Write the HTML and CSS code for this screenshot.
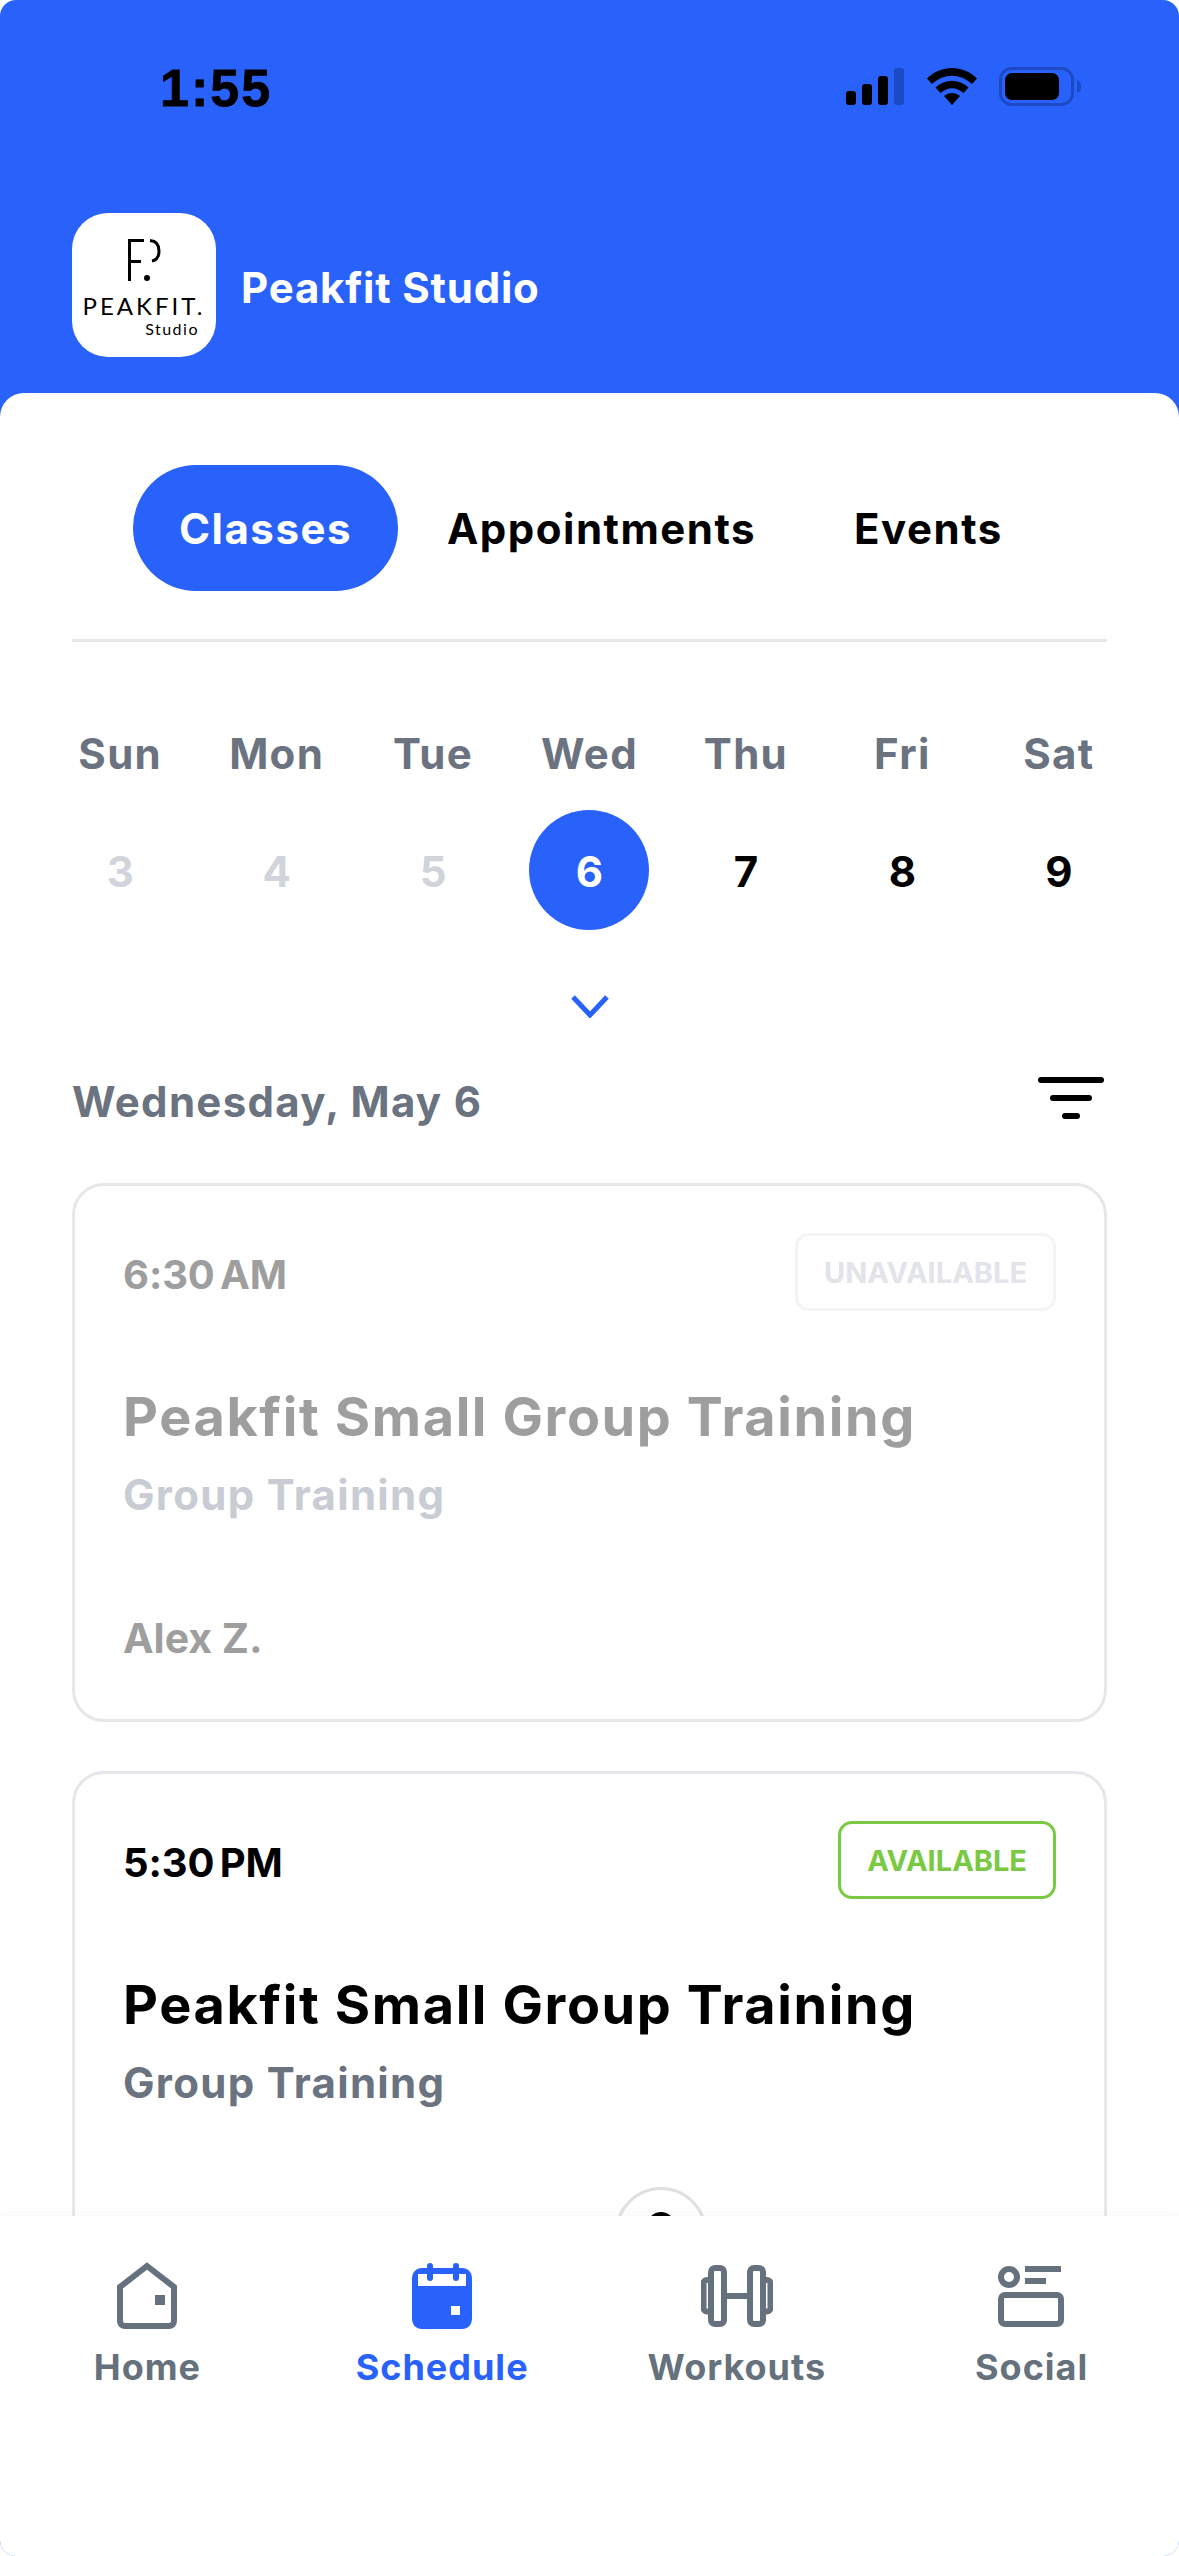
FILE: index.html
```html
<!DOCTYPE html>
<html lang="en">
<head>
    <meta charset="UTF-8">
    <meta name="viewport" content="width=device-width, initial-scale=1.0">
    <title>Peakfit Studio</title>
    <link rel="stylesheet" href="styles.css">
</head>
<body>
    <div class="app">
        <header class="top">
            <div class="status">
                <span class="clock">1:55</span>
                <div class="status-icons">
                    <svg width="58" height="37" viewBox="0 0 58 37">
                        <rect x="0" y="23" width="10" height="14" rx="3"/>
                        <rect x="16" y="16" width="10" height="21" rx="3"/>
                        <rect x="32" y="8" width="10" height="29" rx="3"/>
                        <rect class="dim" x="48" y="0" width="10" height="37" rx="3"/>
                    </svg>
                    <svg width="50" height="37" viewBox="0 0 50 37">
                        <path d="M0 10.500C14-3.500 36-3.500 50 10.500L45 16C33 5 17 5 5 16Z"/>
                        <path d="M8.500 19.500C18 10.500 32 10.500 41.500 19.500L36.500 25C29 18.500 21 18.500 13.500 25Z"/>
                        <path d="M17 28C22 24 28 24 33 28L25 37Z"/>
                    </svg>
                    <svg width="82" height="39" viewBox="0 0 82 39">
                        <rect class="dim-line" x="1.500" y="1.500" width="72" height="36" rx="11"/>
                        <rect x="6" y="6" width="54" height="27" rx="7"/>
                        <path class="dim" d="M78 13C81 14 82 16 82 19.500C82 23 81 25 78 26Z"/>
                    </svg>
                </div>
            </div>
            <div class="brand">
                <div class="logo">
                    <svg class="logo-mark" width="33" height="43" viewBox="0 0 33 43">
                        <rect x="0" y="0" width="3" height="42"/>
                        <rect x="0" y="0" width="16" height="3"/>
                        <rect x="0" y="21" width="13" height="3"/>
                        <path class="logo-curve" d="M22 1.500C29 2 31 7 31 12C31 17 29 21 24 22"/>
                        <circle cx="19" cy="39" r="3"/>
                    </svg>
                    <span class="logo-name">PEAKFIT.</span>
                    <span class="logo-sub">Studio</span>
                </div>
                <span class="brand-name">Peakfit Studio</span>
            </div>
        </header>

        <main class="panel">
            <nav class="tabs">
                <a class="tab active">Classes</a>
                <a class="tab">Appointments</a>
                <a class="tab">Events</a>
            </nav>

            <div class="week">
                <span class="wd">Sun</span>
                <span class="wd">Mon</span>
                <span class="wd">Tue</span>
                <span class="wd">Wed</span>
                <span class="wd">Thu</span>
                <span class="wd">Fri</span>
                <span class="wd">Sat</span>
                <span class="day past">3</span>
                <span class="day past">4</span>
                <span class="day past">5</span>
                <span class="day current">6</span>
                <span class="day">7</span>
                <span class="day">8</span>
                <span class="day">9</span>
            </div>

            <div class="expand">
                <svg width="38" height="24" viewBox="0 0 38 24"><path d="M2 3L19 21L36 3"/></svg>
            </div>

            <div class="date-row">
                <h2>Wednesday, May 6</h2>
                <div class="filter">
                    <span class="f1"></span>
                    <span class="f2"></span>
                    <span class="f3"></span>
                </div>
            </div>

            <section class="card off">
                <div class="card-head">
                    <span class="time">6:30 AM</span>
                    <span class="badge">UNAVAILABLE</span>
                </div>
                <h3>Peakfit Small Group Training</h3>
                <p class="kind">Group Training</p>
                <p class="coach">Alex Z.</p>
            </section>

            <section class="card">
                <div class="card-head">
                    <span class="time">5:30 PM</span>
                    <span class="badge">AVAILABLE</span>
                </div>
                <h3>Peakfit Small Group Training</h3>
                <p class="kind">Group Training</p>
                <div class="avatar"><span class="avatar-head"></span></div>
            </section>
        </main>

        <footer class="tabbar">
            <a class="item">
                <svg width="62" height="68" viewBox="0 0 62 68">
                    <path class="line" d="M31 4L58 25V59C58 62 56 64 53 64H9C6 64 4 62 4 59V25Z"/>
                    <rect class="solid" x="39" y="33" width="10" height="10"/>
                </svg>
                <span>Home</span>
            </a>
            <a class="item selected">
                <svg width="62" height="68" viewBox="0 0 62 68">
                    <path class="solid" d="M1 17C1 10 5 6 11 6H51C57 6 61 10 61 17V56C61 63 57 67 51 67H11C5 67 1 63 1 56Z"/>
                    <path class="cut" d="M7 12H55V24H7Z"/>
                    <rect class="solid" x="16" y="1" width="6" height="18" rx="3"/>
                    <rect class="solid" x="42" y="1" width="6" height="18" rx="3"/>
                    <rect class="cut" x="40" y="44" width="9" height="9"/>
                </svg>
                <span>Schedule</span>
            </a>
            <a class="item">
                <svg width="72" height="62" viewBox="0 0 72 62">
                    <rect class="line" x="10" y="3" width="13" height="56" rx="4"/>
                    <rect class="line" x="49" y="3" width="13" height="56" rx="4"/>
                    <path class="line" d="M10 15H6C4 15 2.500 16.500 2.500 18V43C2.500 45 4 46.500 6 46.500H10M62 15H66C68 15 69.500 16.500 69.500 18V43C69.500 45 68 46.500 66 46.500H62M23 31H49"/>
                </svg>
                <span>Workouts</span>
            </a>
            <a class="item">
                <svg width="68" height="62" viewBox="0 0 68 62">
                    <circle class="line" cx="11" cy="12" r="8"/>
                    <rect class="solid" x="27" y="1" width="36" height="6"/>
                    <rect class="solid" x="27" y="13" width="21" height="6"/>
                    <rect class="line" x="3" y="30" width="60" height="29" rx="4"/>
                </svg>
                <span>Social</span>
            </a>
        </footer>
    </div>
</body>
</html>
```

FILE: styles.css
```css
/* Peakfit schedule screen */
* {
    box-sizing: border-box;
}
body {
    margin: 0;
    background-color: #fff;
    font-family: Inter, "Liberation Sans", sans-serif;
    color: #000;
}
h2, h3, p {
    margin: 0;
}
.app {
    width: 1179px;
    height: 2556px;
    display: flex;
    flex-direction: column;
    overflow: hidden;
    background-color: #2962fb;
    border-radius: 16px;
}

/* blue header */
.top {
    flex-shrink: 0;
}
.status {
    height: 175px;
    padding: 68px 98px 0 160px;
    display: flex;
    justify-content: space-between;
    align-items: flex-start;
}
.clock {
    font-family: "Liberation Sans", sans-serif;
    font-weight: 700;
    font-size: 52px;
    line-height: 40px;
    letter-spacing: 2px;
    -webkit-text-stroke: 0.8px #000;
}
.status-icons {
    display: flex;
    align-items: flex-start;
    gap: 23px;
}
.status-icons svg:last-child {
    margin-left: -1px;
    margin-top: -1px;
}
.dim {
    fill: #1c49c4;
}
.dim-line {
    fill: none;
    stroke: #1c49c4;
    stroke-width: 3;
}
.brand {
    padding: 38px 72px 36px;
    display: flex;
    align-items: center;
    gap: 25px;
}
.logo {
    width: 144px;
    height: 144px;
    background-color: #fff;
    border-radius: 36px;
    display: flex;
    flex-direction: column;
    align-items: center;
    padding-top: 26px;
}
.logo-curve {
    fill: none;
    stroke: #000;
    stroke-width: 3;
}
.logo-name {
    margin-top: 10px;
    font-family: Lato, sans-serif;
    font-weight: 400;
    font-size: 24px;
    line-height: 28px;
    letter-spacing: 3px;
    white-space: nowrap;
}
.logo-sub {
    align-self: flex-end;
    margin-right: 17px;
    font-family: Lato, sans-serif;
    font-weight: 400;
    font-size: 16px;
    line-height: 18px;
    letter-spacing: 1.5px;
}
.brand-name {
    margin-top: 5px;
    font-size: 42px;
    font-weight: 700;
    color: #fff;
    letter-spacing: 0.8px;
}

/* white panel */
.panel {
    flex: 1;
    min-height: 0;
    overflow: hidden;
    background-color: #fff;
    border-radius: 24px 24px 0 0;
    padding: 72px 72px 0;
}
.tabs {
    display: flex;
    align-items: center;
    gap: 49px;
    padding: 0 0 48px 61px;
    border-bottom: 3px solid #e5e7eb;
}
.tab {
    font-size: 42px;
    font-weight: 700;
    letter-spacing: 1.5px;
    white-space: nowrap;
}
.tab.active {
    width: 265px;
    height: 126px;
    border-radius: 63px;
    background-color: #2962fb;
    color: #fff;
    display: flex;
    align-items: center;
    justify-content: center;
}
.tab + .tab + .tab {
    margin-left: 49px;
}

/* week strip */
.week {
    margin: 0 -30px;
    padding-top: 84px;
    display: grid;
    grid-template-columns: repeat(7, 1fr);
    grid-template-rows: 55px 120px;
    row-gap: 29px;
    justify-items: center;
    align-items: center;
}
.wd {
    font-size: 42px;
    font-weight: 700;
    letter-spacing: 1.3px;
    color: #6b7280;
}
.day {
    width: 120px;
    height: 120px;
    border-radius: 50%;
    display: flex;
    align-items: center;
    justify-content: center;
    padding-top: 2px;
    font-size: 42px;
    font-weight: 700;
}
.day.past {
    color: #d1d5db;
}
.day.current {
    background-color: #2962fb;
    color: #fff;
}
.expand {
    display: flex;
    justify-content: center;
    padding-top: 64px;
}
.expand svg {
    fill: none;
    stroke: #2962fb;
    stroke-width: 5;
}

/* date row */
.date-row {
    margin-top: 54px;
    display: flex;
    justify-content: space-between;
    align-items: flex-start;
}
.date-row h2 {
    font-size: 42px;
    font-weight: 700;
    letter-spacing: 1.3px;
    line-height: 60px;
    color: #6b7280;
}
.filter {
    width: 66px;
    margin: 5px 3px 0 0;
    display: flex;
    flex-direction: column;
    align-items: center;
    gap: 12px;
}
.filter span {
    height: 6px;
    border-radius: 3px;
    background-color: #000;
}
.f1 { width: 66px; }
.f2 { width: 42px; }
.f3 { width: 18px; }

/* class cards */
.card {
    margin-top: 51px;
    height: 539px;
    border: 3px solid #e5e7eb;
    border-radius: 32px;
    padding: 47px 48px 0;
}
.card + .card {
    margin-top: 49px;
    height: 600px;
}
.card-head {
    display: flex;
    justify-content: space-between;
    align-items: center;
    height: 78px;
}
.time {
    margin-top: 4px;
    font-size: 40px;
    font-weight: 700;
    letter-spacing: -0.1px;
    word-spacing: -4px;
}
.badge {
    height: 78px;
    padding: 0 26px;
    border: 3px solid #7ac943;
    border-radius: 14px;
    color: #7ac943;
    font-size: 29px;
    font-weight: 700;
    line-height: 74px;
}
.card h3 {
    margin-top: 65px;
    font-size: 54px;
    font-weight: 700;
    letter-spacing: 1.6px;
    line-height: 81px;
    white-space: nowrap;
}
.kind {
    margin-top: 8px;
    font-size: 42px;
    font-weight: 700;
    letter-spacing: 1.3px;
    line-height: 60px;
    color: #6b7280;
}
.coach {
    margin-top: 83px;
    font-size: 41px;
    font-weight: 700;
    line-height: 60px;
}
.card.off .time,
.card.off h3,
.card.off .coach {
    color: #9e9e9e;
}
.card.off .kind {
    color: #c9ccd3;
}
.card.off .badge {
    border-color: #f3f4f6;
    color: #e2e4e9;
}
.avatar {
    margin: 74px 0 0 492px;
    width: 92px;
    height: 92px;
    border: 3px solid #e0e0e0;
    border-radius: 50%;
    display: flex;
    justify-content: center;
    padding-top: 22px;
}
.avatar-head {
    width: 28px;
    height: 28px;
    border-radius: 50%;
    background-color: #000;
}

/* bottom tab bar */
.tabbar {
    flex-shrink: 0;
    height: 340px;
    background-color: #fff;
    box-shadow: 0 -2px 12px rgba(0, 0, 0, 0.03);
    position: relative;
    display: grid;
    grid-template-columns: repeat(4, 1fr);
    padding-top: 46px;
}
.item {
    display: flex;
    flex-direction: column;
    align-items: center;
    height: 130px;
    color: #65717c;
    font-size: 36px;
    font-weight: 700;
    letter-spacing: 1px;
}
.item svg {
    height: 68px;
    flex-shrink: 0;
}
.item span {
    margin-top: 10px;
    line-height: 54px;
}
.item.selected {
    color: #2962fb;
}
.line {
    fill: none;
    stroke: #65717c;
    stroke-width: 6;
}
.solid {
    fill: #65717c;
    stroke: none;
}
.selected .solid {
    fill: #2962fb;
}
.cut {
    fill: #fff;
}
```
